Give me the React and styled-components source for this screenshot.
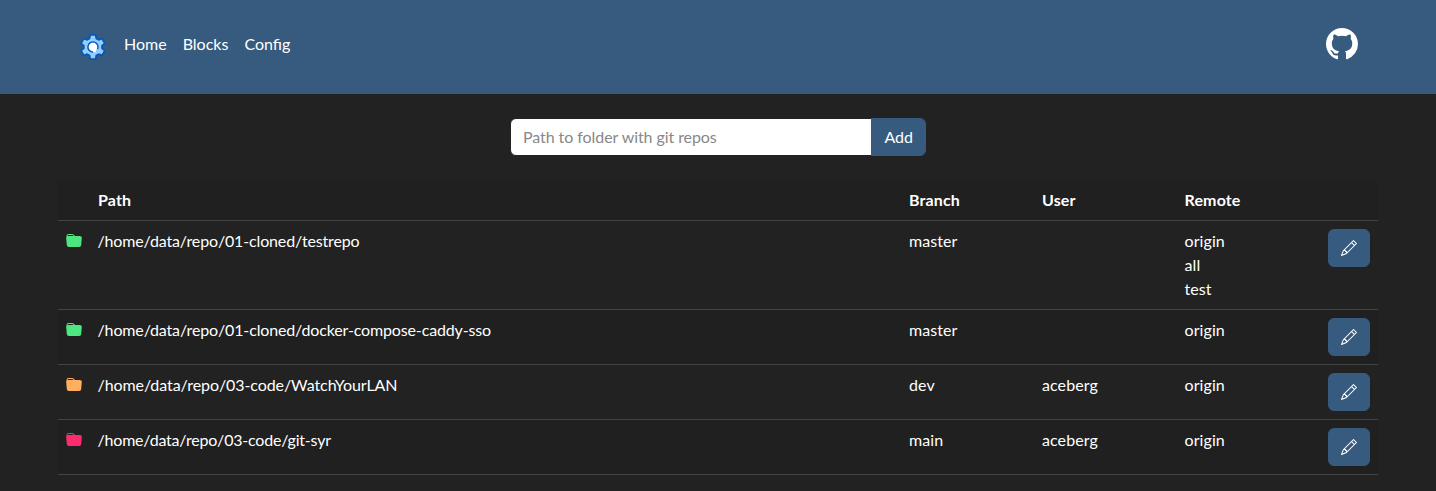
import React from "react";
import styled, { createGlobalStyle } from "styled-components";
import { BsFolderFill, BsPencil, BsGithub } from "react-icons/bs";

const GlobalStyle = createGlobalStyle`
  *, *::before, *::after { box-sizing: border-box; }
  body {
    margin: 0;
    background: #222;
    color: #fff;
    font: 400 16px/1.5 Lato, "Liberation Sans", sans-serif;
  }
`;

const Navbar = styled.nav`
  display: flex;
  align-items: flex-start;
  justify-content: space-between;
  height: 94px;
  padding: 28px 78px 0;
  background: #375a7f;
`;

const NavLinks = styled.div`
  display: flex;
  gap: 16px;
`;

const Logo = styled.svg`
  display: block;
  width: 30px;
  height: 30px;
  margin-top: 4px;
`;

const NavLink = styled.a`
  margin-top: 4px;
  color: #fff;
  text-decoration: none;
`;

const GithubLink = styled.a`
  display: block;
  height: 32px;
  color: #fff;
  svg { display: block; width: 32px; height: 32px; }
`;

const Content = styled.main`
  width: 1320px;
  margin: 0 auto;
  padding-top: 24px;
`;

const AddForm = styled.form`
  display: flex;
  width: 416px;
  margin: 0 auto 24px;
`;

const PathInput = styled.input`
  flex: 1;
  min-width: 0;
  height: 38px;
  padding: 5px 12px 7px;
  border: 1px solid #222;
  border-radius: 6px 0 0 6px;
  background: #fff;
  color: #303030;
  font: inherit;
  &::placeholder { color: #888; opacity: 1; letter-spacing: -0.07px; }
`;

const Button = styled.button`
  height: 38px;
  padding: 6px 12px;
  border: 1px solid #375a7f;
  border-radius: ${(p) => (p.$joined ? "0 6px 6px 0" : "6px")};
  margin-left: ${(p) => (p.$joined ? "-1px" : "0")};
  background: #375a7f;
  color: #fff;
  font: inherit;
  svg { display: inline-block; vertical-align: -2px; }
`;

const Table = styled.table`
  width: 100%;
  table-layout: fixed;
  border-collapse: separate;
  border-spacing: 0;
`;

const Col = styled.col`
  width: ${(p) => p.$width}px;
`;

const HeadCell = styled.th`
  padding: 8px;
  border-bottom: 1px solid #434343;
  background: #202020;
  text-align: left;
  font-weight: 700;
  letter-spacing: 0.15px;
`;

const Row = styled.tr`
  &:nth-child(even) { background: #202020; }
`;

const Cell = styled.td`
  padding: 8px;
  border-bottom: 1px solid #434343;
  vertical-align: top;
  letter-spacing: 0.08px;
`;

const PathCell = styled(Cell)`
  padding-left: 7.5px;
  letter-spacing: ${(p) => p.$tracking}px;
`;

const FolderIcon = styled(BsFolderFill)`
  display: inline-block;
  vertical-align: -2px;
  color: ${(p) => p.color};
`;

const repos = [
  { path: "/home/data/repo/01-cloned/testrepo", tracking: -0.147, branch: "master", user: "", remotes: ["origin", "all", "test"], color: "#4ee680" },
  { path: "/home/data/repo/01-cloned/docker-compose-caddy-sso", tracking: -0.142, branch: "master", user: "", remotes: ["origin"], color: "#4ee680" },
  { path: "/home/data/repo/03-code/WatchYourLAN", tracking: -0.08, branch: "dev", user: "aceberg", remotes: ["origin"], color: "#ffaf5f" },
  { path: "/home/data/repo/03-code/git-syr", tracking: -0.2, branch: "main", user: "aceberg", remotes: ["origin"], color: "#ff2c6d" },
];

const columnWidths = [32, 811, 133, 142.5, 142.5, 59];

const polar = (radius, degrees) => {
  const a = (degrees * Math.PI) / 180;
  return `${(14.9 + radius * Math.cos(a)).toFixed(2)},${(15 + radius * Math.sin(a)).toFixed(2)}`;
};

const gearPoints = [0, 1, 2, 3, 4, 5]
  .flatMap((k) => {
    const mid = -90 + 60 * k;
    return [polar(9.2, mid - 21), polar(12.4, mid - 13), polar(12.4, mid + 13), polar(9.2, mid + 21)];
  })
  .join(" ");

function GearLogo() {
  return (
    <Logo viewBox="0 0 30 30" aria-hidden="true">
      <polygon points={gearPoints} fill="#8fd0ff" stroke="#0a55b5" strokeWidth="1.7" strokeLinejoin="round" />
      <circle cx="15" cy="15" r="4.4" fill="#fff" />
      <path d="M15.4 17.5h2.400v2.600h-2.400z" fill="#fff" />
      <path d="M15 20.100a5.100 5.100 0 1 1 4.600-2.900" fill="none" stroke="#0a55b5" strokeWidth="1.400" />
    </Logo>
  );
}

export default function App() {
  return (
    <>
      <GlobalStyle />
      <Navbar>
        <NavLinks>
          <GearLogo />
          <NavLink>Home</NavLink>
          <NavLink>Blocks</NavLink>
          <NavLink>Config</NavLink>
        </NavLinks>
        <GithubLink aria-label="GitHub"><BsGithub /></GithubLink>
      </Navbar>
      <Content>
        <AddForm>
          <PathInput placeholder="Path to folder with git repos" />
          <Button type="button" $joined>Add</Button>
        </AddForm>
        <Table>
          <colgroup>{columnWidths.map((w, i) => <Col key={i} $width={w} />)}</colgroup>
          <thead>
            <tr>
              <HeadCell />
              <HeadCell>Path</HeadCell>
              <HeadCell>Branch</HeadCell>
              <HeadCell>User</HeadCell>
              <HeadCell>Remote</HeadCell>
              <HeadCell />
            </tr>
          </thead>
          <tbody>
            {repos.map((r) => (
              <Row key={r.path}>
                <Cell><FolderIcon color={r.color} /></Cell>
                <PathCell $tracking={r.tracking}>{r.path}</PathCell>
                <Cell>{r.branch}</Cell>
                <Cell>{r.user}</Cell>
                <Cell>{r.remotes.map((name) => <div key={name}>{name}</div>)}</Cell>
                <Cell align="right"><Button type="button" aria-label="Edit"><BsPencil /></Button></Cell>
              </Row>
            ))}
          </tbody>
        </Table>
      </Content>
    </>
  );
}
